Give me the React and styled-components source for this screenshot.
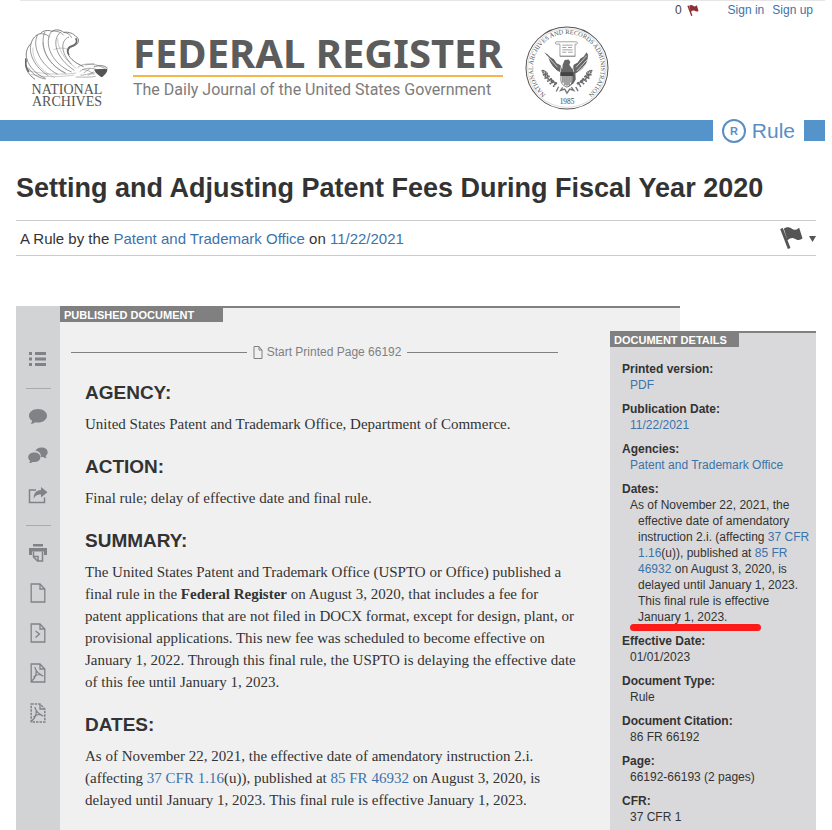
import React from "react";
import styled, { createGlobalStyle } from "styled-components";

const sans = `"Liberation Sans", Arial, sans-serif`;
const serif = `"Liberation Serif", Georgia, serif`;

const GlobalStyle = createGlobalStyle`
  *, *::before, *::after { box-sizing: border-box; }
  body {
    margin: 0;
    background: #fff;
    color: #333;
    font-family: ${sans};
    font-size: 12px;
  }
  h1, h2, h3, p, dl, dd { margin: 0; }
`;

const Page = styled.div`
  display: flex;
  flex-direction: column;
  min-height: 100vh;
  padding-right: 7px;
`;

const Link = styled.a`
  color: #3c73aa;
  text-decoration: none;
  &:hover { text-decoration: underline; }
`;

const UtilityBar = styled.nav`
  display: flex;
  align-items: center;
  justify-content: flex-end;
  gap: 8px;
  height: 19px;
  margin-left: 20px;
  padding-right: 12px;
  border-top: 1px solid #e6e6e6;
  line-height: 16px;
`;

const ClipCount = styled.a`
  display: flex;
  align-items: center;
  gap: 5px;
  margin-right: 21px;
  color: #444;
  text-decoration: none;
`;

const Masthead = styled.header`
  display: flex;
  align-items: flex-start;
  height: 101px;
  padding: 7px 24px 0;
`;

const ArchivesLogo = styled.a`
  display: flex;
  flex-direction: column;
  align-items: center;
  width: 86px;
  padding-top: 3px;
  color: #555;
  font-family: ${serif};
  font-size: 14px;
  line-height: 12px;
  text-decoration: none;
`;

const ArchivesName = styled.span`
  padding-top: 3px;
  text-align: center;
`;

const Brand = styled.a`
  margin: 5px 22px 0 23px;
  color: #5c5c5c;
  text-decoration: none;
`;

const BrandName = styled.span`
  display: block;
  border-bottom: 2px solid #f2b84b;
  font: bold 40px/44px "Noto Sans", sans-serif;
  white-space: nowrap;
`;

const Tagline = styled.span`
  display: block;
  padding-top: 3px;
  color: #7c7c7c;
  font: 16px/20px Roboto, sans-serif;
  white-space: nowrap;
`;

const TypeBar = styled.div`
  display: flex;
  align-items: center;
  height: 21px;
  color: #5b8fc4;
`;

const Stripe = styled.span`
  flex: ${(p) => (p.$grow ? "1" : "0 0 21px")};
  height: 21px;
  background: #5593cb;
`;

const TypeLabel = styled.span`
  display: flex;
  align-items: center;
  gap: 6px;
  padding: 0 9px;
  font-size: 21px;
  line-height: 24px;
`;

const TitleBlock = styled.section`
  padding: 31px 9px 0 16px;
`;

const Title = styled.h1`
  font-size: 27px;
  line-height: 32px;
`;

const Byline = styled.div`
  display: flex;
  align-items: center;
  justify-content: space-between;
  height: 36px;
  margin-top: 16px;
  padding-left: 4px;
  border: solid #ccc;
  border-width: 1px 0;
  font-size: 15px;
`;

const FlagButton = styled.button`
  display: flex;
  align-items: center;
  gap: 6px;
  padding: 0;
  border: 0;
  background: none;
  color: #555;
`;

const Document = styled.div`
  display: grid;
  flex: 1;
  grid-template-columns: 44px 1fr 206px;
  margin: 50px 9px 0 16px;
`;

const Tools = styled.nav`
  display: flex;
  flex-direction: column;
  align-items: center;
  padding-top: 33px;
  background: #d2d3d5;
`;

const ToolButton = styled.button`
  display: flex;
  align-items: center;
  justify-content: center;
  width: 44px;
  height: 40px;
  padding: 0;
  border: 0;
  background: none;
  color: #808285;
`;

const ToolRule = styled.hr`
  width: 25px;
  height: 1px;
  margin: 9px 0 7px;
  border: 0;
  background: #a9aaac;
`;

const Article = styled.main`
  grid-row: 1;
  grid-column: 2 / 4;
  margin-right: 136px;
  border-top: 2px solid #808080;
  background: #f0f0f1;
`;

const Details = styled.aside`
  grid-row: 1;
  grid-column: 3;
  margin-top: 25px;
  border-top: 2px solid #808080;
  background: #d9d9db;
`;

const PanelTab = styled.h2`
  width: ${(p) => p.$width};
  padding-left: 4px;
  background: #808080;
  color: #fff;
  font-size: 11px;
  line-height: 14px;
`;

const ArticleBody = styled.div`
  padding: 19px 103px 18px 25px;
`;

const PrintedPage = styled.div`
  display: flex;
  align-items: center;
  gap: 6px;
  height: 22px;
  margin: 0 19px 18px -14px;
  color: #808080;
  font-size: 12px;
  &::before, &::after {
    content: "";
    flex: 7;
    border-top: 1px solid #808080;
  }
  &::after { flex: 6; }
`;

const PageMark = styled.span`
  display: flex;
  align-items: center;
  gap: 4px;
`;

const Heading = styled.h3`
  margin-bottom: 8px;
  font-size: 19px;
  line-height: 24px;
`;

const Paragraph = styled.p`
  margin-bottom: 20px;
  font-family: ${serif};
  font-size: 15px;
  line-height: 22px;
`;

const DetailList = styled.dl`
  padding: 14px 4px 0 12px;
  line-height: 16px;
`;

const Term = styled.dt`
  font-weight: bold;
`;

const Value = styled.dd`
  margin-bottom: 8px;
  padding-left: 16px;
  text-indent: -8px;
`;

const Marked = styled.span`
  position: relative;
  &::after {
    content: "";
    position: absolute;
    left: -8px;
    bottom: -7px;
    width: 131px;
    height: 7px;
    border-radius: 4px;
    background: #fb1c1a;
  }
`;

const FlagIcon = ({ width, height, color }) => (
  <svg width={width} height={height} viewBox="542 684 68 66" fill={color} aria-hidden="true">
    <path d="M542 690l8-3 23 60-8 3zM553 689c7-6 17-6 24 0 8 6 15 3 22-3l10 32c-8 8-16 5-23 1-8-4-14-2-22 5z" />
  </svg>
);

const WaveEagle = () => (
  <svg width="84" height="52" viewBox="74 88 252 156" fill="none" stroke="#666" strokeWidth="2.500" aria-hidden="true">
    <path d="M104 239C80 222 70 200 80 180c-6-18 0-38 12-48 4-16 16-28 28-30 8-10 24-12 34-7 12-7 26-5 36 3 16-2 30 4 36 12 10 4 12 18 2 25-8 6-22 6-25 20-2 16 18 34 47 46" />
    <path d="M92 132c-8 30 10 70 52 96M112 106c-18 30 6 90 60 118M120 102c14 0 22 4 28 10M134 96c-16 34 0 96 62 124M154 95c-24 30-6 94 60 122M154 95c16-2 28 2 36 12M180 98c-26 22-16 76 42 114M190 98c14 2 20 8 24 16M206 112c-24 8-28 46 8 82M80 180c8 22 26 44 56 56M84 204c12 18 26 30 52 34" strokeWidth="2" />
    <path d="M98 144c-4 40 28 72 66 90M128 126c-2 40 30 76 70 98M172 116c0 30 20 66 56 90M88 214c40 10 96 12 140 6M92 224c40 10 90 8 130 2M160 150c14-6 28-6 40-2" strokeWidth="1" />
    <path d="M226 116c8 12-2 22-14 24-12 4-12 18-6 26M76 176c-2 14 0 28 10 40" strokeWidth="5" />
    <path d="M232 204c12-12 34-14 60-7l22 9M238 216c14-14 34-10 48-8M240 226c16 2 26-8 42-2M226 232c24 0 42 2 60-2M246 210c20-2 24 12 38 10M254 196l28-4M250 220l20-14M262 228l18-12" strokeWidth="1.500" />
    <path d="M282 209l38-2c4 8-6 18-16 26-10-6-22-16-22-24z" fill="#555" stroke="none" />
    <path d="M280 202c14-6 32-6 42 4" />
  </svg>
);

const Seal = () => (
  <svg width="84" height="84" viewBox="0 0 250 250" role="img" aria-label="National Archives seal">
    <defs>
      <path id="seal-arc" d="M71 210A101 101 0 1 1 179 210" />
    </defs>
    <circle cx="125" cy="125" r="122" fill="none" stroke="#555" strokeWidth="3" />
    <circle cx="125" cy="125" r="117" fill="none" stroke="#999" strokeWidth="1" />
    <text fill="#555" fontFamily="Liberation Serif, serif" fontSize="19">
      <textPath href="#seal-arc" startOffset="50%" textAnchor="middle">
        NATIONAL ARCHIVES AND RECORDS ADMINISTRATION
      </textPath>
    </text>
    <text x="125" y="233" textAnchor="middle" fill="#444" fontFamily="Liberation Serif, serif" fontSize="22">1985</text>
    <g fill="none" stroke="#777" strokeWidth="2">
      <path d="M94 47h58c6 0 5 7 0 7h-3v36h-45V54H94c-5 0-5-7 0-7zM111 57h31M111 64h12M128 64h12M111 71h31M111 78h12M128 78h14M104 90h46" />
    </g>
    <path d="M57 78l10 6 9 9 10 6 8 12 12 6 5 12 1-14 6-14 12-1 5 7-3 8 9 14 4-14 12-6 8-12 10-6 8-13 5 8-2 14-5 14-9 12-12 10-10 5 1 18-7 12-14 10-14-9-7-12v-20l-15-8-12-12-8-14-5-14z" fill="#666" />
    <path d="M65 88l32 35M64 99l30 35M69 114l26 27M184 88l-32 35M186 99l-32 35M181 114l-27 27M108 118l-3 21M141 116l4 20" stroke="#fff" strokeWidth="2" fill="none" />
    <path d="M107 139h35v22c0 11-9 18-17 21-9-3-18-10-18-21z" fill="#fff" stroke="#444" strokeWidth="2" />
    <path d="M107 139h35v8h-35zM113 147v22M119 147v29M125 147v31M131 147v29M137 147v22" stroke="#444" strokeWidth="3" fill="#444" />
    <path d="M51 131c5 18 18 30 44 41M53 146l15-5M58 156l15-6M66 165l14-8M73 173l14-10M84 181l10-14M54 132l11 8M60 143l13 8M76 155l9 14M199 131c-6 18-18 30-45 41M198 146l-16-5M192 156l-15-6M184 165l-13-8M176 173l-12-10M166 181l-9-14M195 132l-11 8M188 144l-12 8M174 155l-9 14" stroke="#666" strokeWidth="5" strokeDasharray="5 1" fill="none" />
    <path d="M112 183l-6 9 12-4 7 12 8-12 12 4-7-10M100 181l-7 14M151 181l7 13" stroke="#777" strokeWidth="4" fill="none" />
  </svg>
);

const RuleIcon = () => (
  <svg width="24" height="24" viewBox="0 0 24 24" aria-hidden="true">
    <circle cx="12" cy="12" r="11" fill="none" stroke="#5b8fc4" strokeWidth="2" />
    <text x="12" y="16" textAnchor="middle" fill="#5b8fc4" fontFamily="Liberation Sans, sans-serif" fontSize="11" fontWeight="bold">R</text>
  </svg>
);

const toolPaths = {
  list: (
    <path fill="currentColor" d="M1 3h3v3H1zM7 3h11v3H7zM1 8.500h3v3H1zM7 8.500h11v3H7zM1 14h3v3H1zM7 14h11v3H7z" />
  ),
  comment: (
    <path fill="currentColor" d="M10 3c5 0 9 2.900 9 6.700s-4 6.800-9 6.800c-.9 0-1.800-.1-2.600-.3-1 .9-2.500 1.600-4.700 1.500.9-.9 1.400-1.800 1.300-2.900C2.200 13.600 1 11.700 1 9.700 1 5.900 5 3 10 3z" />
  ),
  discussion: (
    <>
      <path fill="currentColor" d="M13.500 1.500c3.700 0 6.200 2 6.200 4.700 0 1.500-.8 2.800-2 3.600 0 .9.400 1.700 1.100 2.300-1.700 0-2.900-.5-3.700-1.200-.8.200-1.500.2-2.300 0 .5-3.600-2-5.700-5.200-6.100C8.100 2.900 10.300 1.500 13.500 1.500z" />
      <path fill="currentColor" d="M6.400 6.500c3.500 0 6 2 6 4.800s-2.600 4.800-6 4.800c-.6 0-1.200 0-1.700-.2-.9.700-2 1.200-3.600 1.200.7-.7 1-1.500.9-2.300C.9 13.900.2 12.700.2 11.300.2 8.500 2.900 6.500 6.400 6.500z" />
    </>
  ),
  share: (
    <>
      <path fill="none" stroke="currentColor" strokeWidth="1.500" d="M8 4H1.500v12.500h15v-5" />
      <path fill="currentColor" d="M13 1l6.500 5.200L13 11.500v-3c-4 0-5.800 1-7.300 4.500C5.400 7.500 8 4.300 13 4z" />
    </>
  ),
  print: (
    <>
      <path fill="currentColor" d="M5 1h10v2.500H5zM1 5h18v7h-3V8.500H4V12H1z" />
      <path fill="none" stroke="currentColor" strokeWidth="1.500" d="M5.500 8.500V14l4 4h5V8.500M6 13.500h4V18" />
    </>
  ),
  page: <path fill="none" stroke="currentColor" strokeWidth="1.300" d="M3.200 1h8.800l4.800 5v13H3.200zM12 1v5h4.800" />,
  code: <path fill="none" stroke="currentColor" strokeWidth="1.300" d="M3.200 1h8.800l4.800 5v13H3.200zM12 1v5h4.800M7.500 8l4 3-4 3.500" />,
  pdf: (
    <path fill="none" stroke="currentColor" strokeWidth="1.300" d="M3.200 1h8.800l4.800 5v13H3.200zM12 1v5h4.800M7 4c-.3 2 3 7.500 8.300 9.200M8.200 8c.2 3-1.700 7.500-4.400 10M5.500 14c2-1.700 5-3 8-2.500" />
  ),
  pdfDraft: (
    <>
      <path fill="none" stroke="currentColor" strokeWidth="1.500" strokeDasharray="2.500 1" d="M3.200 1h8.800l4.800 5v13H3.200z" />
      <path fill="none" stroke="currentColor" strokeWidth="1.300" d="M12 1v5h4.800M7 4c-.3 2 3 7.500 8.300 9.200M8.200 8c.2 3-1.700 7.500-4.400 10M5.500 14c2-1.700 5-3 8-2.500" />
    </>
  ),
};

const Tool = ({ icon, label }) => (
  <ToolButton type="button" aria-label={label}>
    <svg width="20" height="20" viewBox="0 0 20 20" aria-hidden="true">{toolPaths[icon]}</svg>
  </ToolButton>
);

const details = [
  ["Printed version:", <Link href="#pdf">PDF</Link>],
  ["Publication Date:", <Link href="#date">11/22/2021</Link>],
  ["Agencies:", <Link href="#agency">Patent and Trademark Office</Link>],
  [
    "Dates:",
    <>
      As of November 22, 2021, the effective date of amendatory instruction 2.i. (affecting{" "}
      <Link href="#cfr">37 CFR 1.16</Link>(u)), published at <Link href="#fr">85 FR 46932</Link> on
      August 3, 2020, is delayed until January 1, 2023. This final rule is effective{" "}
      <Marked>January 1, 2023.</Marked>
    </>,
  ],
  ["Effective Date:", "01/01/2023"],
  ["Document Type:", "Rule"],
  ["Document Citation:", "86 FR 66192"],
  ["Page:", "66192-66193 (2 pages)"],
  ["CFR:", "37 CFR 1"],
];

export default function App() {
  return (
    <>
      <GlobalStyle />
      <Page>
        <UtilityBar>
          <ClipCount href="#clipboard">
            0 <FlagIcon width={12} height={11} color="#8b3034" />
          </ClipCount>
          <Link href="#signin">Sign in</Link>
          <Link href="#signup">Sign up</Link>
        </UtilityBar>

        <Masthead>
          <ArchivesLogo href="#archives">
            <WaveEagle />
            <ArchivesName>NATIONAL ARCHIVES</ArchivesName>
          </ArchivesLogo>
          <Brand href="#home">
            <BrandName>FEDERAL REGISTER</BrandName>
            <Tagline>The Daily Journal of the United States Government</Tagline>
          </Brand>
          <Seal />
        </Masthead>

        <TypeBar>
          <Stripe $grow />
          <TypeLabel><RuleIcon />Rule</TypeLabel>
          <Stripe />
        </TypeBar>

        <TitleBlock>
          <Title>Setting and Adjusting Patent Fees During Fiscal Year 2020</Title>
          <Byline>
            <span>
              A Rule by the <Link href="#agency">Patent and Trademark Office</Link> on{" "}
              <Link href="#date">11/22/2021</Link>
            </span>
            <FlagButton type="button" aria-label="Clip this document">
              <FlagIcon width={23} height={22} color="#555" />
              <svg width="7" height="7" viewBox="0 0 7 7" aria-hidden="true"><path d="M0 1h7l-3.500 6z" fill="#555" /></svg>
            </FlagButton>
          </Byline>
        </TitleBlock>

        <Document>
          <Tools aria-label="Document tools">
            <Tool icon="list" label="Table of contents" />
            <ToolRule />
            <Tool icon="comment" label="Comment" />
            <Tool icon="discussion" label="Public comments" />
            <Tool icon="share" label="Share" />
            <ToolRule />
            <Tool icon="print" label="Print" />
            <Tool icon="page" label="Other formats" />
            <Tool icon="code" label="Developer tools" />
            <Tool icon="pdf" label="PDF" />
            <Tool icon="pdfDraft" label="Public inspection PDF" />
          </Tools>

          <Article>
            <PanelTab $width="163px">PUBLISHED DOCUMENT</PanelTab>
            <ArticleBody>
              <PrintedPage>
                <PageMark>
                  <svg width="10" height="13" viewBox="0 0 10 13" fill="none" stroke="#808080" aria-hidden="true">
                    <path d="M1 .5h5l3 3.500v8.500H1zM6 .5V4h3" />
                  </svg>
                  Start Printed Page 66192
                </PageMark>
              </PrintedPage>
              <Heading>AGENCY:</Heading>
              <Paragraph>United States Patent and Trademark Office, Department of Commerce.</Paragraph>
              <Heading>ACTION:</Heading>
              <Paragraph>Final rule; delay of effective date and final rule.</Paragraph>
              <Heading>SUMMARY:</Heading>
              <Paragraph>
                The United States Patent and Trademark Office (USPTO or Office) published a final rule in
                the <strong>Federal Register</strong> on August 3, 2020, that includes a fee for patent
                applications that are not filed in DOCX format, except for design, plant, or provisional
                applications. This new fee was scheduled to become effective on January 1, 2022. Through
                this final rule, the USPTO is delaying the effective date of this fee until January 1, 2023.
              </Paragraph>
              <Heading>DATES:</Heading>
              <Paragraph>
                As of November 22, 2021, the effective date of amendatory instruction 2.i. (affecting{" "}
                <Link href="#cfr">37 CFR 1.16</Link>(u)), published at <Link href="#fr">85 FR 46932</Link>{" "}
                on August 3, 2020, is delayed until January 1, 2023. This final rule is effective January 1,
                2023.
              </Paragraph>
            </ArticleBody>
          </Article>

          <Details>
            <PanelTab $width="129px">DOCUMENT DETAILS</PanelTab>
            <DetailList>
              {details.map(([term, value]) => (
                <React.Fragment key={term}>
                  <Term>{term}</Term>
                  <Value>{value}</Value>
                </React.Fragment>
              ))}
            </DetailList>
          </Details>
        </Document>
      </Page>
    </>
  );
}
